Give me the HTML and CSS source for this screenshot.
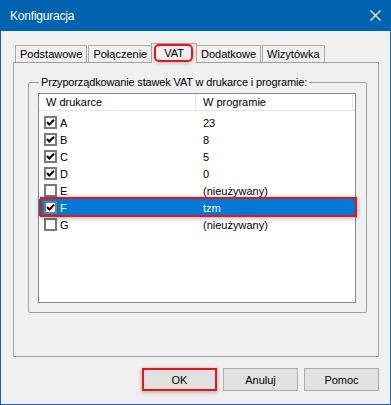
FILE: index.html
```html
<!DOCTYPE html>
<html lang="pl">
<head>
<meta charset="utf-8">
<title>Konfiguracja</title>
<link rel="stylesheet" href="styles.css">
</head>
<body>
<div class="window">
  <div class="titlebar">
    <span class="title">Konfiguracja</span>
    <svg class="close" width="11" height="11" viewBox="0 0 11 11"><path d="M0.5 0.5 L10.5 10.5 M10.5 0.5 L0.5 10.5" stroke="#fff" stroke-width="1.1" fill="none"/></svg>
  </div>
  <div class="body">
    <div class="tabs">
      <div class="tab">Podstawowe</div>
      <div class="tab">Połączenie</div>
      <div class="tab active">VAT</div>
      <div class="tab">Dodatkowe</div>
      <div class="tab">Wizytówka</div>
    </div>
    <div class="panel">
      <fieldset class="group">
        <legend>Przyporządkowanie stawek VAT w drukarce i programie:</legend>
        <div class="list">
          <div class="lhead">
            <div class="hc c1">W drukarce</div>
            <div class="hc c2">W programie</div>
          </div>
          <div class="rows">
            <div class="row"><div class="cell c1"><span class="cb checked"><svg width="9" height="9" viewBox="0 0 9 9"><path d="M1 4 L3.3 6.5 L8 1.8" stroke="#000" stroke-width="2" fill="none"/></svg></span><span class="lbl">A</span></div><div class="cell c2">23</div></div>
            <div class="row"><div class="cell c1"><span class="cb checked"><svg width="9" height="9" viewBox="0 0 9 9"><path d="M1 4 L3.3 6.5 L8 1.8" stroke="#000" stroke-width="2" fill="none"/></svg></span><span class="lbl">B</span></div><div class="cell c2">8</div></div>
            <div class="row"><div class="cell c1"><span class="cb checked"><svg width="9" height="9" viewBox="0 0 9 9"><path d="M1 4 L3.3 6.5 L8 1.8" stroke="#000" stroke-width="2" fill="none"/></svg></span><span class="lbl">C</span></div><div class="cell c2">5</div></div>
            <div class="row"><div class="cell c1"><span class="cb checked"><svg width="9" height="9" viewBox="0 0 9 9"><path d="M1 4 L3.3 6.5 L8 1.8" stroke="#000" stroke-width="2" fill="none"/></svg></span><span class="lbl">D</span></div><div class="cell c2">0</div></div>
            <div class="row"><div class="cell c1"><span class="cb"></span><span class="lbl">E</span></div><div class="cell c2">(nieużywany)</div></div>
            <div class="row sel"><div class="cell c1"><span class="cb checked"><svg width="9" height="9" viewBox="0 0 9 9"><path d="M1 4 L3.3 6.5 L8 1.8" stroke="#000" stroke-width="2" fill="none"/></svg></span><span class="lbl">F</span></div><div class="cell c2">tzm</div></div>
            <div class="row"><div class="cell c1"><span class="cb"></span><span class="lbl">G</span></div><div class="cell c2">(nieużywany)</div></div>
          </div>
        </div>
      </fieldset>
    </div>
    <div class="buttons">
      <div class="btn mark">OK</div>
      <div class="btn">Anuluj</div>
      <div class="btn">Pomoc</div>
    </div>
  </div>
</div>
</body>
</html>
```
FILE: styles.css
```css
* { box-sizing: border-box; }
html, body { margin: 0; padding: 0; }
body {
  width: 391px;
  height: 405px;
  overflow: hidden;
  background: #fff;
  font-family: "Liberation Sans", Arial, sans-serif;
  font-size: 11px;
  color: #000;
}
.window {
  width: 391px;
  height: 405px;
  border: 1px solid #1a60ad;
  border-top: none;
  background: #f0f0f0;
  display: flex;
  flex-direction: column;
}
.titlebar {
  height: 31px;
  margin: 0 -1px;
  padding: 0 10px 0 10px;
  background: #0063b1;
  color: #fff;
  display: flex;
  align-items: center;
  justify-content: space-between;
  flex-shrink: 0;
}
.title { font-size: 12px; letter-spacing: -0.2px; }
.close { display: block; }
.body {
  flex: 1;
  padding: 12px 11px 0 12px;
  display: flex;
  flex-direction: column;
}
.tabs {
  display: flex;
  align-items: flex-end;
  height: 19px;
  padding-left: 2px;
  gap: 1px;
  position: relative;
  z-index: 1;
}
.tab {
  height: 17px;
  border: 1px solid #acacac;
  border-bottom: none;
  padding: 0 4px;
  line-height: 16px;
  background: #f0f0f0;
  white-space: nowrap;
}
.tab.active {
  height: 20px;
  margin: 0 -2px -1px;
  padding: 1px 12px 0;
  position: relative;
}
.tab.active::after {
  content: "";
  position: absolute;
  left: 2px;
  right: 3px;
  top: 0;
  bottom: 1px;
  border: 2px solid #e8141c;
  border-radius: 5px;
  box-shadow: 0 1px 4px rgba(0,0,0,0.25);
}
.panel {
  height: 295px;
  border: 1px solid #a0a0a0;
  padding: 13px 11px 0 14px;
}
.group {
  margin: 0;
  border: 1px solid #a0a0a0;
  border-radius: 2px;
  padding: 4px 10px 9px 9px;
}
.group legend {
  padding: 0 2px;
  margin-left: 1px;
  line-height: 13px;
  letter-spacing: -0.15px;
}
.list {
  height: 210px;
  border: 1px solid #828790;
  background: #fff;
}
.lhead {
  display: flex;
  height: 17px;
  border-bottom: 1px solid #e5e5e5;
}
.hc {
  padding-left: 7px;
  line-height: 16px;
  border-right: 1px solid #e5e5e5;
}
.c1 { width: 157px; }
.c2 { width: 157px; }
.rows { padding-top: 3px; }
.row {
  display: flex;
  height: 17px;
  align-items: center;
}
.cell { display: flex; align-items: center; height: 17px; }
.row .c1 { padding-left: 5px; }
.row .c2 { padding-left: 7px; }
.lbl { margin-left: 3px; }
.cb {
  width: 13px;
  height: 13px;
  border: 2px solid #7a7a7a;
  background: #fff;
  display: flex;
  align-items: center;
  justify-content: center;
}
.cb svg { display: block; }
.row.sel {
  background: #0078d7;
  color: #fff;
  position: relative;
}
.row.sel::after {
  content: "";
  position: absolute;
  left: 1px;
  right: -2px;
  top: -2px;
  bottom: -1px;
  border: 2px solid #e8141c;
  box-shadow: 0 1px 5px rgba(0,0,0,0.35);
}
.buttons {
  display: flex;
  justify-content: flex-end;
  gap: 6px;
  margin-top: 11px;
}
.btn {
  width: 75px;
  height: 23px;
  border: 1px solid #adadad;
  background: #e1e1e1;
  display: flex;
  align-items: center;
  justify-content: center;
}
.btn.mark {
  border: 2px solid #e8141c;
  box-shadow: 0 1px 5px rgba(0,0,0,0.3);
}
```
